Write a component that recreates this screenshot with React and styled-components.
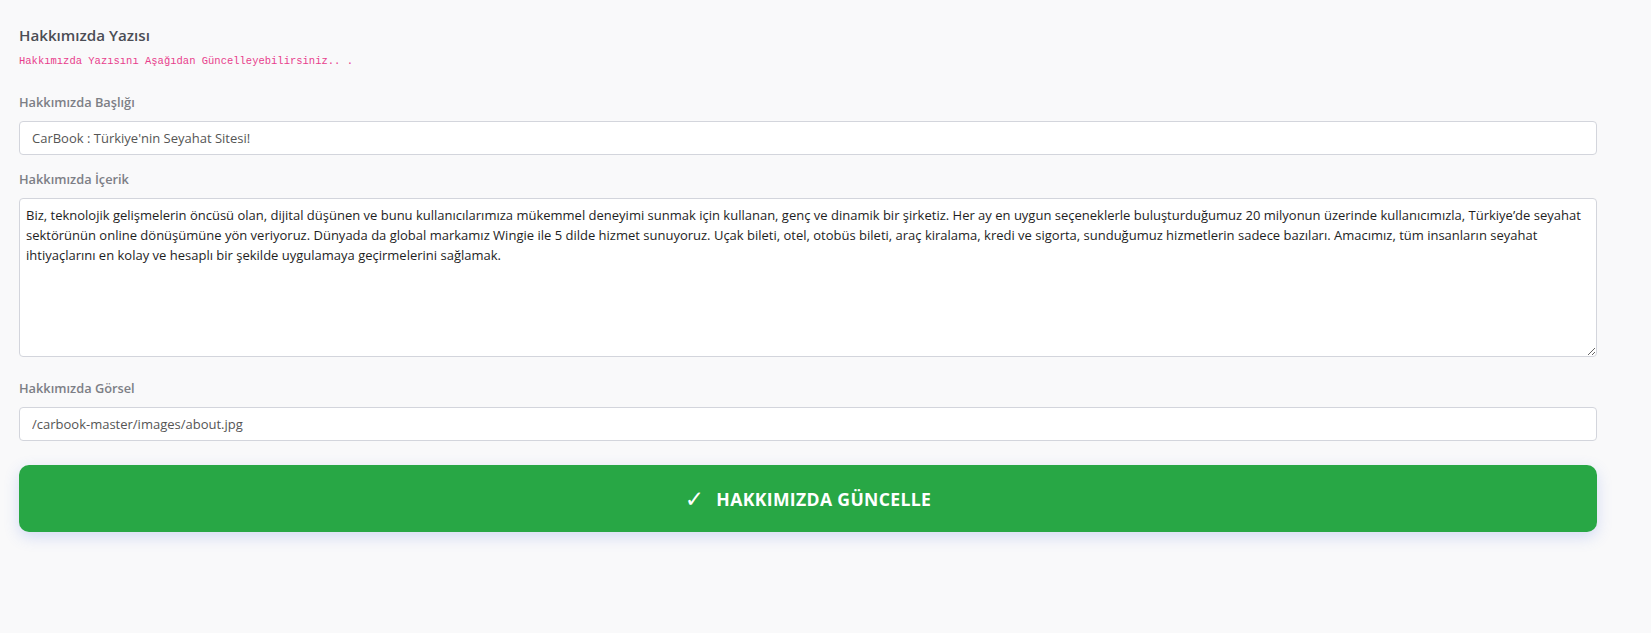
import React from "react";
import styled, { createGlobalStyle } from "styled-components";

const Global = createGlobalStyle`
  html, body { margin: 0; padding: 0; background: #f9f9fa; }
  body { font-family: "Open Sans", "Liberation Sans", sans-serif; }
  * { box-sizing: border-box; }
`;

const Page = styled.div`
  padding: 25px 54px 40px 19px;
  min-height: 633px;
`;

const Header = styled.div`
  margin-bottom: 25px;
`;

const Title = styled.h4`
  margin: 0;
  font-size: 15.2px;
  line-height: 20px;
  font-weight: 600;
  color: #4b4d55;
`;

const Sub = styled.code`
  display: block;
  margin-top: 9px;
  font-family: "Liberation Mono", "DejaVu Sans Mono", monospace;
  font-size: 10.5px;
  line-height: 14px;
  color: #e83e8c;
`;

const Field = styled.div`
  display: flex;
  flex-direction: column;
  margin-bottom: ${(p) => p.$after}px;
`;

const Label = styled.label`
  font-size: 12.8px;
  line-height: 18px;
  font-weight: 600;
  color: #7d7f86;
  margin-bottom: 10px;
`;

const Input = styled.input`
  display: block;
  height: 34px;
  width: 100%;
  padding: 0 12px;
  border: 1px solid #d3d5dc;
  border-radius: 4px;
  background: #fff;
  font-family: "Open Sans", sans-serif;
  font-size: 13px;
  color: #555;
  outline: none;
`;

const TextArea = styled.textarea`
  display: block;
  width: 100%;
  height: 159px;
  padding: 6px 6px;
  border: 1px solid #d3d5dc;
  border-radius: 4px;
  background: #fff;
  font-family: "Open Sans", sans-serif;
  font-size: 13px;
  line-height: 20px;
  color: #1e1e1e;
  outline: none;
  resize: vertical;
`;

const Button = styled.button`
  width: 100%;
  height: 67px;
  border: none;
  border-radius: 10px;
  background: #28a745;
  color: #fff;
  font-family: "Open Sans", sans-serif;
  font-size: 17.6px;
  font-weight: 700;
  letter-spacing: 0.35px;
  display: flex;
  align-items: center;
  justify-content: center;
  gap: 12px;
  box-shadow: 0 5px 15px rgba(78, 115, 223, 0.22);
  cursor: pointer;
`;

const Check = styled.span`
  font-family: "DejaVu Sans", sans-serif;
  font-size: 23px;
  line-height: 1;
  font-weight: 700;
  position: relative;
  top: 1px;
`;

const content =
  "Biz, teknolojik gelişmelerin öncüsü olan, dijital düşünen ve bunu kullanıcılarımıza mükemmel deneyimi sunmak için kullanan, genç ve dinamik bir şirketiz. Her ay en uygun seçeneklerle buluşturduğumuz 20 milyonun üzerinde kullanıcımızla, Türkiye’de seyahat sektörünün online dönüşümüne yön veriyoruz. Dünyada da global markamız Wingie ile 5 dilde hizmet sunuyoruz. Uçak bileti, otel, otobüs bileti, araç kiralama, kredi ve sigorta, sunduğumuz hizmetlerin sadece bazıları. Amacımız, tüm insanların seyahat ihtiyaçlarını en kolay ve hesaplı bir şekilde uygulamaya geçirmelerini sağlamak.";

export default function App() {
  return (
    <>
      <Global />
      <Page>
        <Header>
          <Title>Hakkımızda Yazısı</Title>
          <Sub>Hakkımızda Yazısını Aşağıdan Güncelleyebilirsiniz.. .</Sub>
        </Header>
        <Field $after={15}>
          <Label>Hakkımızda Başlığı</Label>
          <Input defaultValue="CarBook : Türkiye'nin Seyahat Sitesi!" />
        </Field>
        <Field $after={22}>
          <Label>Hakkımızda İçerik</Label>
          <TextArea defaultValue={content} />
        </Field>
        <Field $after={24}>
          <Label>Hakkımızda Görsel</Label>
          <Input defaultValue="/carbook-master/images/about.jpg" />
        </Field>
        <Button>
          <Check>✓</Check>
          HAKKIMIZDA GÜNCELLE
        </Button>
      </Page>
    </>
  );
}
